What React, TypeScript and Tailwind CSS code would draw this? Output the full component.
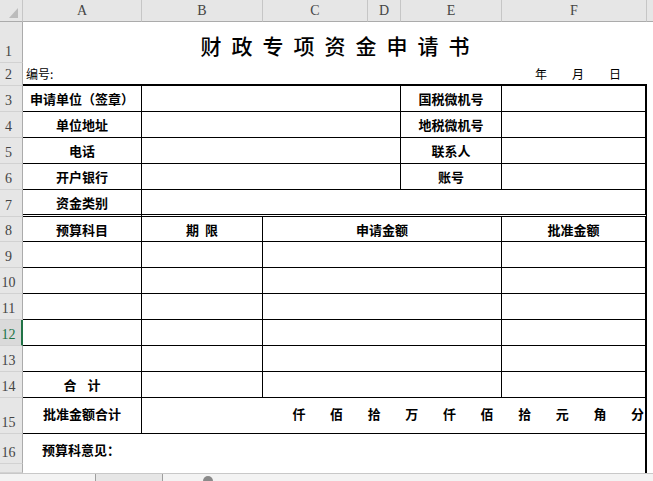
import React from "react";

const HDR = "bg-[#e6e6e6] text-[#444] [font-family:'Liberation_Serif',serif]";
const CELL =
  "shrink-0 border-b border-r border-black flex items-center justify-center font-bold text-[13px] leading-none text-black";

const COLS: { label: string; w: string }[] = [
  { label: "A", w: "w-[119px]" },
  { label: "B", w: "w-[121px]" },
  { label: "C", w: "w-[105px]" },
  { label: "D", w: "w-[33px]" },
  { label: "E", w: "w-[101px]" },
  { label: "F", w: "w-[145px]" },
];

function RowHead({ n, sel }: { n: number | string; sel?: boolean }) {
  return (
    <div
      className={`w-[23px] shrink-0 flex items-end border-b border-b-[#d2d2d2] text-[14px] leading-none ${HDR} ${
        sel ? "border-r-2 border-r-[#217346] !text-[#217346] !bg-[#dadada]" : "border-r border-r-[#ababab]"
      }`}
    >
      <span className="w-[17px] text-center pb-[3px]">{n}</span>
    </div>
  );
}

function Row({ n, h, sel, children }: { n: number | string; h: string; sel?: boolean; children?: React.ReactNode }) {
  return (
    <div className={`flex ${h}`}>
      <RowHead n={n} sel={sel} />
      {children}
    </div>
  );
}

function Blank({ n, sel }: { n: number; sel?: boolean }) {
  return (
    <Row n={n} h="h-[26px]" sel={sel}>
      <div className={`${CELL} w-[119px]`} />
      <div className={`${CELL} w-[121px]`} />
      <div className={`${CELL} w-[239px]`} />
      <div className={`${CELL} w-[145px] border-r-2`} />
    </Row>
  );
}

const UNITS = ["仟", "佰", "拾", "万", "仟", "佰", "拾", "元", "角", "分"];

export default function App() {
  return (
    <div className="w-[653px] h-[481px] overflow-hidden bg-white [font-family:'Noto_Sans_CJK_SC',sans-serif]">
      {/* column header */}
      <div className="flex h-[22px]">
        <div className={`w-[23px] shrink-0 border-r border-b border-r-[#c6c6c6] border-b-[#ababab] flex items-end justify-end pr-[4px] pb-[3px] ${HDR}`}>
          <svg width="9" height="10" viewBox="0 0 9 10">
            <path d="M9 0 L9 10 L0 10 Z" fill="#bcbcbc" />
          </svg>
        </div>
        {COLS.map((c) => (
          <div
            key={c.label}
            className={`${c.w} shrink-0 border-r border-b border-r-[#c6c6c6] border-b-[#ababab] flex items-center justify-center text-[14px] leading-none ${HDR}`}
          >
            {c.label}
          </div>
        ))}
        <div className={`flex-1 border-b border-b-[#ababab] ${HDR}`} />
      </div>

      {/* row 1: title */}
      <Row n={1} h="h-[41px]">
        <div className="w-[624px] shrink-0 flex items-end justify-center gap-[10px] pb-[7px] text-[21px] font-medium leading-none text-black">
          {"财政专项资金申请书".split("").map((c, i) => (
            <span key={i}>{c}</span>
          ))}
        </div>
      </Row>

      {/* row 2 */}
      <Row n={2} h="h-[23px]">
        <div className="w-[624px] shrink-0 border-b-2 border-black flex items-end pb-[4px] pl-[3px] pr-[26px] text-[12px] leading-none text-black">
          <span>编号:</span>
          <span className="ml-auto flex gap-[25px]">
            <span>年</span>
            <span>月</span>
            <span>日</span>
          </span>
        </div>
      </Row>

      {/* rows 3-6 */}
      {[
        ["申请单位（签章）", "国税微机号"],
        ["单位地址", "地税微机号"],
        ["电话", "联系人"],
        ["开户银行", "账号"],
      ].map(([l, r], i) => (
        <Row key={i} n={i + 3} h="h-[26px]">
          <div className={`${CELL} w-[119px]`}>{l}</div>
          <div className={`${CELL} w-[259px]`} />
          <div className={`${CELL} w-[101px]`}>{r}</div>
          <div className={`${CELL} w-[145px] border-r-2`} />
        </Row>
      ))}

      {/* row 7 */}
      <Row n={7} h="h-[27px]">
        <div className={`${CELL} w-[119px] border-b-[3px] border-double`}>资金类别</div>
        <div className={`${CELL} w-[505px] border-b-[3px] border-double border-r-2`} />
      </Row>

      {/* row 8 */}
      <Row n={8} h="h-[25px]">
        <div className={`${CELL} w-[119px]`}>预算科目</div>
        <div className={`${CELL} w-[121px] gap-[6px]`}>
          <span>期</span>
          <span>限</span>
        </div>
        <div className={`${CELL} w-[239px]`}>申请金额</div>
        <div className={`${CELL} w-[145px] border-r-2`}>批准金额</div>
      </Row>

      <Blank n={9} />
      <Blank n={10} />
      <Blank n={11} />
      <Blank n={12} sel />
      <Blank n={13} />

      {/* row 14 */}
      <Row n={14} h="h-[26px]">
        <div className={`${CELL} w-[119px] gap-[11px]`}>
          <span>合</span>
          <span>计</span>
        </div>
        <div className={`${CELL} w-[121px]`} />
        <div className={`${CELL} w-[239px]`} />
        <div className={`${CELL} w-[145px] border-r-2`} />
      </Row>

      {/* row 15 */}
      <Row n={15} h="h-[36px]">
        <div className={`${CELL} w-[119px] pb-[4px]`}>批准金额合计</div>
        <div className={`${CELL} w-[505px] border-r-2 !justify-end gap-[24.6px] pr-[1px] pb-[4px]`}>
          {UNITS.map((u, i) => (
            <span key={i}>{u}</span>
          ))}
        </div>
      </Row>

      {/* row 16 */}
      <Row n={16} h="h-[30px]">
        <div className="w-[624px] shrink-0 border-r-2 border-black pl-[19px] pt-[9px] font-bold text-[13px] leading-none text-black">
          预算科意见：
        </div>
      </Row>

      {/* row 17 (partial) */}
      <Row n="" h="h-[9px]">
        <div className="w-[624px] shrink-0 border-r-2 border-black" />
      </Row>

      {/* sheet tab bar */}
      <div className="flex h-[8px] bg-[#e6e6e6] border-t border-[#c8c8c8]">
        <div className="w-[96px] shrink-0 bg-[#f3f3f3] border-r border-[#9e9e9e]" />
        <div className="w-[66px] shrink-0" />
        <div className="flex-1 bg-[#f3f3f3] border-l border-[#9e9e9e] pl-[40px]">
          <div className="w-[10px] h-[5px] mt-[2px] rounded-t-full bg-[#8a8a8a]" />
        </div>
      </div>
    </div>
  );
}
